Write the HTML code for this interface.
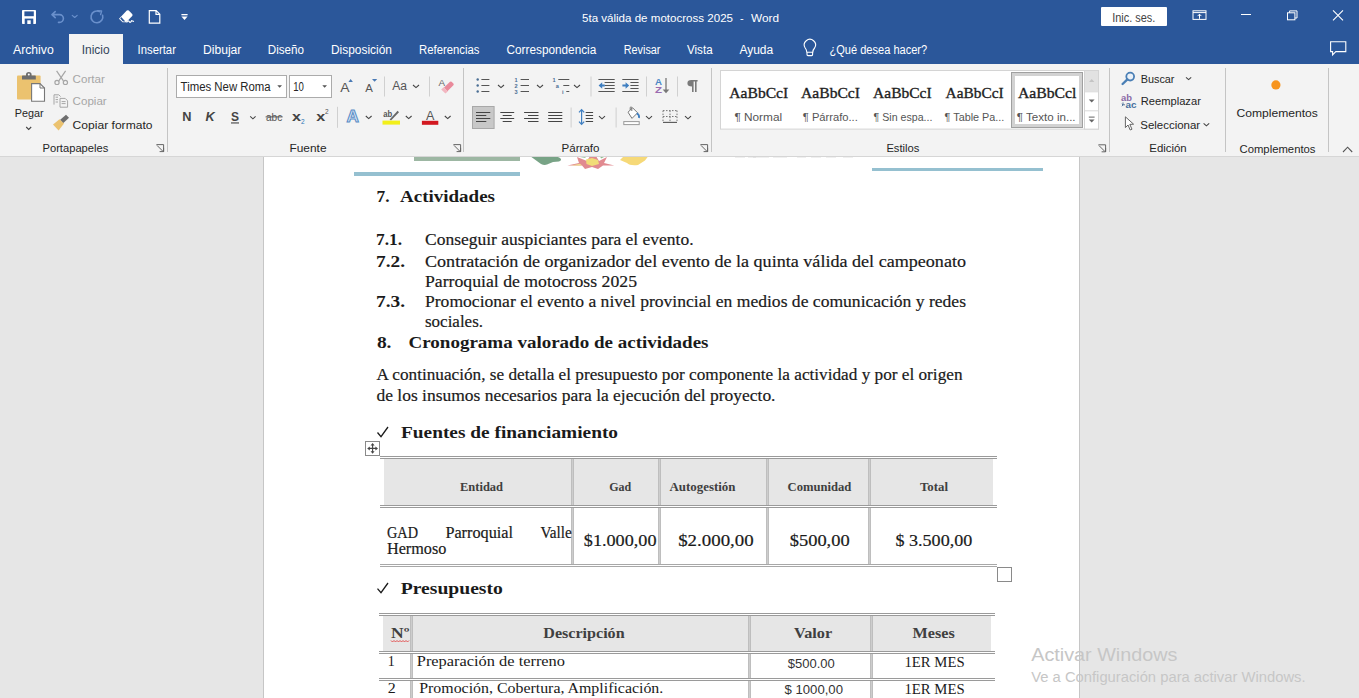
<!DOCTYPE html>
<html><head><meta charset="utf-8">
<style>
*{margin:0;padding:0;box-sizing:border-box}
html,body{width:1359px;height:698px;overflow:hidden;background:#e6e6e6;font-family:"Liberation Sans",sans-serif}
svg{position:absolute;display:block}
</style></head><body>
<svg style="position:absolute;left:0;top:156px" width="1359" height="542" viewBox="0 156 1359 542">
<rect x="264" y="156" width="815" height="542" fill="#fff"/>
<rect x="263" y="156" width="1" height="542" fill="#c6c6c6"/>
<rect x="1079" y="156" width="1" height="542" fill="#c6c6c6"/>
<g font-family="Liberation Serif" fill="#1a1a1a">
<!-- header image remnants -->
<rect x="414" y="156" width="106" height="5" fill="#9db7a3"/>
<rect x="354" y="172" width="166" height="4" fill="#95c0d0"/>
<path d="M530 156 H556 L560 158 Q562.5 160 559 161.5 L553 162 L547 164.6 Q544 165.4 541 164 Z" fill="#78a386"/>
<path d="M567.4 165.6 L579 163 L577 157 L587 161 L590 156 H596 L599 161 L607 157 L604 163 L614.3 165.4 L603 165.6 L598 169 L592 167 L585 169 L582 165.6 Z" fill="#e18a90"/>
<path d="M586 159.5 L592 158 L598 160 L599 164 L592 166 L586.5 164 Z" fill="#f1dc78"/>
<path d="M580 157 L584 156 L586 158 Z M600 156 L604 157 L601 158.4 Z" fill="#8fbf8f"/>
<path d="M571 165.4 L580 163.8 L582 165.4 Z" fill="#f0e090"/>
<path d="M620 160 L624 156 H648.4 L645 160.5 L638 165 Q630 166 627 163 Z" fill="#f6d978"/>
<rect x="650" y="156" width="80" height="1" fill="#f3ecd0"/>
<g fill="#b0b0b0"><rect x="735" y="156" width="10" height="1.2"/><rect x="748" y="156" width="8" height="1.2"/><rect x="753" y="156" width="16" height="1.2"/><rect x="773" y="156" width="14" height="1.2"/><rect x="797" y="156" width="9" height="1.2"/><rect x="811" y="156" width="10" height="1.2"/><rect x="826" y="156" width="10" height="1.2"/><rect x="843" y="156" width="10" height="1.2"/></g>
<rect x="872" y="168" width="171" height="3" fill="#95c0d0"/>

<g font-weight="bold" font-size="17.2">
<text x="376.5" y="202" textLength="13" lengthAdjust="spacingAndGlyphs">7.</text>
<text x="400" y="202" textLength="95" lengthAdjust="spacingAndGlyphs">Actividades</text>
<text x="376" y="245" textLength="26" lengthAdjust="spacingAndGlyphs">7.1.</text>
<text x="376" y="266.5" textLength="29" lengthAdjust="spacingAndGlyphs">7.2.</text>
<text x="376" y="307" textLength="29" lengthAdjust="spacingAndGlyphs">7.3.</text>
<text x="376.9" y="348" textLength="14.6" lengthAdjust="spacingAndGlyphs">8.</text>
<text x="408.5" y="348" textLength="300" lengthAdjust="spacingAndGlyphs">Cronograma valorado de actividades</text>
<text x="401" y="438" textLength="217" lengthAdjust="spacingAndGlyphs">Fuentes de financiamiento</text>
<text x="400.8" y="594" textLength="102" lengthAdjust="spacingAndGlyphs">Presupuesto</text>
</g>
<g font-size="17.2" stroke="#1a1a1a" stroke-width="0.2">
<text x="425" y="245" textLength="268.6" lengthAdjust="spacingAndGlyphs">Conseguir auspiciantes para el evento.</text>
<text x="425" y="266.5" textLength="541" lengthAdjust="spacingAndGlyphs">Contratación de organizador del evento de la quinta válida del campeonato</text>
<text x="425" y="286.6" textLength="212" lengthAdjust="spacingAndGlyphs">Parroquial de motocross 2025</text>
<text x="425" y="306.6" textLength="541" lengthAdjust="spacingAndGlyphs">Promocionar el evento a nivel provincial en medios de comunicación y redes</text>
<text x="425" y="326.8" textLength="58" lengthAdjust="spacingAndGlyphs">sociales.</text>
<text x="376.5" y="380" textLength="586" lengthAdjust="spacingAndGlyphs">A continuación, se detalla el presupuesto por componente la actividad y por el origen</text>
<text x="376.5" y="400.5" textLength="399" lengthAdjust="spacingAndGlyphs">de los insumos necesarios para la ejecución del proyecto.</text>
</g>
<path d="M377.5 432.5 L381 436.6 L388 427" fill="none" stroke="#1a1a1a" stroke-width="1.3"/>
<path d="M377.5 588.6 L381 592.6 L388 583" fill="none" stroke="#1a1a1a" stroke-width="1.3"/>
</g>
<g font-family="Liberation Serif" fill="#1a1a1a">
<rect x="384" y="459" width="187" height="46" fill="#e6e6e6"/>
<rect x="574" y="459" width="84" height="46" fill="#e6e6e6"/>
<rect x="661" y="459" width="105" height="46" fill="#e6e6e6"/>
<rect x="768" y="459" width="100" height="46" fill="#e6e6e6"/>
<rect x="871" y="459" width="122" height="46" fill="#e6e6e6"/>
<rect x="571" y="459" width="3" height="105" fill="#cdcdcd"/><rect x="571" y="459" width="1" height="105" fill="#bebebe"/><rect x="573" y="459" width="1" height="105" fill="#bebebe"/>
<rect x="658" y="459" width="3" height="105" fill="#cdcdcd"/><rect x="658" y="459" width="1" height="105" fill="#bebebe"/><rect x="660" y="459" width="1" height="105" fill="#bebebe"/>
<rect x="766" y="459" width="3" height="105" fill="#cdcdcd"/><rect x="766" y="459" width="1" height="105" fill="#bebebe"/><rect x="768" y="459" width="1" height="105" fill="#bebebe"/>
<rect x="868" y="459" width="3" height="105" fill="#cdcdcd"/><rect x="868" y="459" width="1" height="105" fill="#bebebe"/><rect x="870" y="459" width="1" height="105" fill="#bebebe"/>
<rect x="380" y="506" width="617" height="1" fill="#fff"/><rect x="380" y="565" width="617" height="1" fill="#fff"/>
<rect x="380" y="456" width="617" height="1" fill="#9a9a9a"/>
<rect x="380" y="458" width="617" height="1" fill="#9a9a9a"/>
<rect x="380" y="505" width="617" height="1" fill="#9a9a9a"/>
<rect x="380" y="507" width="617" height="1" fill="#9a9a9a"/>
<rect x="380" y="564" width="617" height="1" fill="#a8a8a8"/>
<rect x="380" y="566" width="617" height="1" fill="#a8a8a8"/>
<g font-weight="bold" font-size="12" fill="#404040">
<text x="460" y="490.6" textLength="43" lengthAdjust="spacingAndGlyphs">Entidad</text>
<text x="609.3" y="490.6" textLength="22" lengthAdjust="spacingAndGlyphs">Gad</text>
<text x="669.5" y="490.6" textLength="66" lengthAdjust="spacingAndGlyphs">Autogestión</text>
<text x="787.6" y="490.6" textLength="63.8" lengthAdjust="spacingAndGlyphs">Comunidad</text>
<text x="920" y="490.6" textLength="28" lengthAdjust="spacingAndGlyphs">Total</text>
</g><g font-size="17.2" stroke="#1a1a1a" stroke-width="0.2">
<text x="387" y="537.5" textLength="31" lengthAdjust="spacingAndGlyphs">GAD</text>
<text x="445.4" y="537.5" textLength="67.6" lengthAdjust="spacingAndGlyphs">Parroquial</text>
<text x="540.4" y="537.5" textLength="31.3" lengthAdjust="spacingAndGlyphs">Valle</text>
<text x="387" y="553.5" textLength="59.3" lengthAdjust="spacingAndGlyphs">Hermoso</text>
<text x="583.8" y="545.6" textLength="72.7" lengthAdjust="spacingAndGlyphs">$1.000,00</text>
<text x="678.2" y="545.6" textLength="75.5" lengthAdjust="spacingAndGlyphs">$2.000,00</text>
<text x="789.7" y="545.6" textLength="60" lengthAdjust="spacingAndGlyphs">$500,00</text>
<text x="895.4" y="545.6" textLength="76.9" lengthAdjust="spacingAndGlyphs">$ 3.500,00</text>
</g>
<rect x="365.5" y="441.5" width="14" height="14" fill="#fff" stroke="#8a8a8a"/>
<path d="M372.6 445 V452 M369 448.4 H376.2" stroke="#444" stroke-width="1.1" fill="none"/>
<path d="M372.6 443 L370.6 445.6 H374.6 Z M372.6 453.8 L370.6 451.2 H374.6 Z M367.2 448.4 L369.8 446.4 V450.4 Z M378 448.4 L375.4 446.4 V450.4 Z" fill="#444"/>
<rect x="997.5" y="567.5" width="14" height="14" fill="#fff" stroke="#8a8a8a"/>
<rect x="383" y="616" width="27" height="35" fill="#e6e6e6"/>
<rect x="413" y="616" width="335" height="35" fill="#e6e6e6"/>
<rect x="750" y="616" width="120" height="35" fill="#e6e6e6"/>
<rect x="872" y="616" width="119" height="35" fill="#e6e6e6"/>
<rect x="410" y="616" width="3" height="82" fill="#cdcdcd"/><rect x="410" y="616" width="1" height="82" fill="#bebebe"/><rect x="412" y="616" width="1" height="82" fill="#bebebe"/>
<rect x="748" y="616" width="3" height="82" fill="#cdcdcd"/><rect x="748" y="616" width="1" height="82" fill="#bebebe"/><rect x="750" y="616" width="1" height="82" fill="#bebebe"/>
<rect x="870" y="616" width="3" height="82" fill="#cdcdcd"/><rect x="870" y="616" width="1" height="82" fill="#bebebe"/><rect x="872" y="616" width="1" height="82" fill="#bebebe"/>
<rect x="379" y="652" width="616" height="1" fill="#fff"/><rect x="379" y="679" width="616" height="1" fill="#fff"/>
<rect x="379" y="613" width="616" height="1" fill="#9a9a9a"/>
<rect x="379" y="615" width="616" height="1" fill="#9a9a9a"/>
<rect x="379" y="651" width="616" height="1" fill="#9a9a9a"/>
<rect x="379" y="653" width="616" height="1" fill="#9a9a9a"/>
<rect x="379" y="678" width="616" height="1" fill="#9a9a9a"/>
<rect x="379" y="680" width="616" height="1" fill="#9a9a9a"/>
<g font-weight="bold" font-size="14" fill="#404040">
<text x="391" y="637.9" textLength="18.4" lengthAdjust="spacingAndGlyphs">Nº</text>
<text x="543.3" y="637.9" textLength="81.3" lengthAdjust="spacingAndGlyphs">Descripción</text>
<text x="794" y="637.9" textLength="38.2" lengthAdjust="spacingAndGlyphs">Valor</text>
<text x="912.6" y="637.9" textLength="42.1" lengthAdjust="spacingAndGlyphs">Meses</text>
</g>
<path d="M391 640.5 l1.5 1.5 1.5-1.5 1.5 1.5 1.5-1.5 1.5 1.5 1.5-1.5 1.5 1.5 1.5-1.5 1.5 1.5 1.5-1.5 1.5 1.5 1.5-1.5" stroke="#e03030" fill="none" stroke-width="0.8"/>
<g font-size="15">
<text x="387.8" y="666.3" textLength="7" lengthAdjust="spacingAndGlyphs">1</text>
<text x="416.8" y="666.3" textLength="148.2" lengthAdjust="spacingAndGlyphs">Preparación de terreno</text>
<text x="387.8" y="693.3" textLength="8" lengthAdjust="spacingAndGlyphs">2</text>
<text x="419.2" y="693.3" textLength="244.1" lengthAdjust="spacingAndGlyphs">Promoción, Cobertura, Amplificación.</text>
<text x="904.4" y="667" textLength="60.2" lengthAdjust="spacingAndGlyphs">1ER MES</text>
<text x="904.4" y="694" textLength="60.2" lengthAdjust="spacingAndGlyphs">1ER MES</text>
</g><g font-size="13" font-family="Liberation Sans" fill="#333">
<text x="787.8" y="667.9" textLength="47" lengthAdjust="spacingAndGlyphs">$500.00</text>
<text x="784.5" y="694.4" textLength="58.5" lengthAdjust="spacingAndGlyphs">$ 1000,00</text>
</g>
</g>
<g font-family="Liberation Sans" fill="#c6c6c6">
<text x="1031.2" y="661" font-size="18.2" textLength="146.3" lengthAdjust="spacingAndGlyphs">Activar Windows</text>
<text x="1031.2" y="681.8" font-size="14" textLength="274.4" lengthAdjust="spacingAndGlyphs">Ve a Configuración para activar Windows.</text>
</g>
</svg>

<svg style="left:0;top:0" width="1359" height="157" viewBox="0 0 1359 157">
<defs>
<style>
.ui{font-family:"Liberation Sans",sans-serif}
.w{fill:#fff}
</style>
</defs>
<!-- title bar + tabs -->
<rect x="0" y="0" width="1359" height="64" fill="#2b579a"/>
<!-- ribbon -->
<rect x="0" y="64" width="1359" height="92" fill="#f3f3f3"/>
<rect x="0" y="156" width="1359" height="1" fill="#d6d6d6"/>
<rect x="69" y="34" width="54" height="30" fill="#f3f3f3"/>

<g class="ui" fill="#fff">
<text x="582" y="21.7" font-size="11" textLength="151" lengthAdjust="spacingAndGlyphs">5ta válida de motocross 2025</text>
<text x="740" y="21.7" font-size="11">-</text>
<text x="751" y="21.7" font-size="11" textLength="28" lengthAdjust="spacingAndGlyphs">Word</text>
</g>
<g class="ui" fill="#fff" font-size="12">
<text x="13" y="53.7" textLength="40.7" lengthAdjust="spacingAndGlyphs">Archivo</text>
<text x="81.7" y="53.9" textLength="27.9" lengthAdjust="spacingAndGlyphs" fill="#35465c">Inicio</text>
<text x="137.6" y="53.7" textLength="38.3" lengthAdjust="spacingAndGlyphs">Insertar</text>
<text x="203" y="53.7" textLength="38.4" lengthAdjust="spacingAndGlyphs">Dibujar</text>
<text x="267.8" y="53.7" textLength="36.2" lengthAdjust="spacingAndGlyphs">Diseño</text>
<text x="331" y="53.7" textLength="61" lengthAdjust="spacingAndGlyphs">Disposición</text>
<text x="419.1" y="53.7" textLength="60.4" lengthAdjust="spacingAndGlyphs">Referencias</text>
<text x="506.5" y="53.7" textLength="89.8" lengthAdjust="spacingAndGlyphs">Correspondencia</text>
<text x="623.7" y="53.7" textLength="36.8" lengthAdjust="spacingAndGlyphs">Revisar</text>
<text x="687" y="53.7" textLength="25.6" lengthAdjust="spacingAndGlyphs">Vista</text>
<text x="739.4" y="53.7" textLength="33.8" lengthAdjust="spacingAndGlyphs">Ayuda</text>
<text x="829.5" y="53.7" textLength="97.7" lengthAdjust="spacingAndGlyphs">¿Qué desea hacer?</text>
</g>
<!-- sign in -->
<rect x="1101" y="7" width="66" height="19" rx="1" fill="#fff"/>
<text class="ui" x="1112.2" y="21.8" font-size="12" fill="#444" textLength="43.1" lengthAdjust="spacingAndGlyphs">Inic. ses.</text>

<!-- ribbon group labels -->
<g class="ui" fill="#262626" font-size="11.5">
<text x="42.5" y="152.1" textLength="65.8" lengthAdjust="spacingAndGlyphs">Portapapeles</text>
<text x="289.5" y="152.1" textLength="37" lengthAdjust="spacingAndGlyphs">Fuente</text>
<text x="561.5" y="152.1" textLength="38" lengthAdjust="spacingAndGlyphs">Párrafo</text>
<text x="886.4" y="152.1" textLength="33" lengthAdjust="spacingAndGlyphs">Estilos</text>
<text x="1149.3" y="151.8" textLength="37.4" lengthAdjust="spacingAndGlyphs">Edición</text>
<text x="1239.5" y="152.5" textLength="76" lengthAdjust="spacingAndGlyphs">Complementos</text>
</g>
<!-- group separators -->
<g fill="#c4c4c4">
<rect x="167" y="68" width="1" height="84"/>
<rect x="463" y="68" width="1" height="84"/>
<rect x="711" y="68" width="1" height="84"/>
<rect x="1109" y="68" width="1" height="84"/>
<rect x="1225" y="68" width="1" height="84"/>
<rect x="1328" y="68" width="1" height="84"/>
</g>
<!-- QAT -->
<rect x="22" y="10" width="14" height="14" rx="0.8" fill="#fff"/>
<rect x="24.4" y="11.4" width="9.4" height="4.8" fill="#2b579a"/>
<rect x="24.7" y="18.6" width="8.6" height="5.4" fill="#2b579a"/>
<rect x="27.3" y="20.3" width="3.4" height="3.7" fill="#fff"/>
<g stroke="#6a90cc" fill="none" stroke-width="1.6" stroke-linecap="round" stroke-linejoin="round">
<path d="M52 14.6 L55.2 11.6 M52 14.6 L55.2 17.6 M52 14.6 H59.5 A3.9 3.9 0 0 1 59.5 22.4 H58.5"/>
<path d="M72.2 15.3 L74.7 17.5 L77.2 15.3" stroke-width="1.1"/>
<path d="M99.6 11.6 A5.9 5.9 0 1 0 102.6 15.2"/>
<path d="M97.6 10.6 L101.6 11 L100.6 14.6" stroke-width="1.4"/>
</g>
<g fill="#fff">
<path d="M119 18.8 L126.8 10.6 Q127.8 9.8 128.8 10.6 L132.2 14 Q133 15 132.2 16 L126.2 22.2 L122.6 22.2 Z"/>
<path d="M121.2 17 L125.4 21.4 L123 21.4 L120.2 18.4 Z" fill="#2b579a"/>
<path d="M126.6 22.6 Q128 19.8 129.2 21.6 Q130.4 23.4 131.6 20.8 L134 21.6" fill="none" stroke="#fff" stroke-width="1.1"/>
</g>
<path d="M149.3 10.6 H156.2 L159.8 14.2 V23.2 H149.3 Z M156 10.6 V14.4 H159.8" fill="none" stroke="#fff" stroke-width="1.2"/>
<rect x="181.4" y="14" width="6.2" height="1.3" fill="#fff"/>
<path d="M181.4 16.6 H187.6 L184.5 19.9 Z" fill="#fff"/>
<!-- window controls -->
<g stroke="#fff" fill="none" stroke-width="1">
<rect x="1193" y="10.8" width="13" height="8.6"/>
<path d="M1193 12.6 H1206 M1199.5 18.8 V14.2 M1197.6 16.1 L1199.5 14.2 L1201.4 16.1"/>
<path d="M1241 14.5 H1251"/>
<rect x="1287.5" y="12.8" width="7.4" height="7"/>
<path d="M1289.6 12.8 V10.9 H1297 V18 H1294.9"/>
<path d="M1333 10.3 L1343 20.3 M1343 10.3 L1333 20.3" stroke-width="1.1"/>
<path d="M1330.6 41.8 H1345.8 V51.6 H1335.8 L1332.6 54.8 V51.6 H1330.6 Z" stroke-width="1.1"/>
<path d="M807 52.6 V54.6 Q807 55.6 808 55.6 H811.6 Q812.6 55.6 812.6 54.6 V52.6 M806.8 52.2 Q806.6 49.6 805.2 48 A5.6 5.6 0 1 1 814.6 48 Q813 49.6 812.8 52.2 Z" stroke-width="1.1"/>
</g>

<!-- Portapapeles -->
<rect x="17" y="75.5" width="23.6" height="24" rx="1" fill="#ebc26f"/>
<path d="M22 79.4 V76.2 Q22 75.6 22.6 75.6 H26 V74.6 Q26 72 28.8 72 Q31.6 72 31.6 74.6 V75.6 H35.2 Q35.8 75.6 35.8 76.2 V79.4 Z" fill="#6e6e6e"/>
<circle cx="28.8" cy="74.6" r="1" fill="#fff"/>
<path d="M31.6 83.6 H40 L44.5 88 V101.2 H31.6 Z" fill="#fff" stroke="#777" stroke-width="1.1"/>
<path d="M40 83.6 V88 H44.5" fill="none" stroke="#777" stroke-width="1"/>
<g class="ui" fill="#262626" font-size="11.5">
<text x="14.8" y="116.6" textLength="28.8" lengthAdjust="spacingAndGlyphs">Pegar</text>
<text x="72.6" y="128.5" textLength="79.9" lengthAdjust="spacingAndGlyphs">Copiar formato</text>
</g>
<path d="M26.2 127 L28.7 129.4 L31.2 127" fill="none" stroke="#444" stroke-width="1.1"/>
<g class="ui" fill="#a6a6a6" font-size="11.5">
<text x="72.6" y="82.8" textLength="32.2" lengthAdjust="spacingAndGlyphs">Cortar</text>
<text x="72.6" y="105.3" textLength="34.1" lengthAdjust="spacingAndGlyphs">Copiar</text>
</g>
<g fill="none" stroke="#a6a6a6" stroke-width="1.2">
<path d="M56.6 70.8 L63.4 80.8 M65.6 70.8 L58.8 80.8"/>
<circle cx="57" cy="82.4" r="2.1"/>
<circle cx="65.4" cy="82.4" r="2.1"/>
<path d="M54 104.6 V94.8 H58.8 L60.6 96.6 M60 98.4 H65.2 L67.6 100.8 V107.2 H60 Z M55.6 97.2 H58 M55.6 99.6 H58 M55.6 102 H58 M61.6 101.6 H65.6 M61.6 103.6 H65.6" stroke-width="1"/>
</g>
<path d="M53 124.5 L59.5 119.2 L64 123.6 L58.6 130.6 Z" fill="#ebc26f"/>
<path d="M60.2 119.8 L66 114.8 L69 117.8 L63.4 123 Z" fill="#6e6e6e"/>
<path d="M156.4 144.6 H163.6 V151.8 M157 145.4 L163 151.4 M159.6 151.6 H163.6 V147.8" fill="none" stroke="#666" stroke-width="1"/>
<!-- Fuente -->
<rect x="176.5" y="75.5" width="110" height="22" fill="#fff" stroke="#ababab"/>
<rect x="289.5" y="75.5" width="42" height="22" fill="#fff" stroke="#ababab"/>
<g class="ui" fill="#262626" font-size="12">
<text x="180.6" y="90.6" textLength="90.1" lengthAdjust="spacingAndGlyphs">Times New Roma</text>
<text x="293.2" y="90.6" textLength="10.7" lengthAdjust="spacingAndGlyphs">10</text>
</g>
<path d="M277.3 85.2 H282 L279.65 87.8 Z M322.3 85.2 H327 L324.65 87.8 Z" fill="#555"/>
<g class="ui" fill="#444" font-weight="bold">
<text x="182.2" y="121.2" font-size="12.5" textLength="9.2" lengthAdjust="spacingAndGlyphs">N</text>
<text x="205.6" y="121.2" font-size="12.5" font-style="italic" textLength="9.2" lengthAdjust="spacingAndGlyphs">K</text>
<text x="231" y="121.2" font-size="12.5" textLength="8" lengthAdjust="spacingAndGlyphs">S</text>
<text x="292" y="121.2" font-size="12" textLength="9" lengthAdjust="spacingAndGlyphs">x</text>
<text x="316.3" y="121.2" font-size="12" textLength="9" lengthAdjust="spacingAndGlyphs">x</text>
</g>
<rect x="231" y="122.4" width="8" height="1.1" fill="#444"/>
<text class="ui" x="266" y="120.8" font-size="11" fill="#555" textLength="16.3" lengthAdjust="spacingAndGlyphs">abc</text>
<rect x="265.6" y="116.4" width="17" height="1" fill="#555"/>
<text class="ui" x="301" y="123.6" font-size="6.5" fill="#2e75b6">2</text>
<text class="ui" x="325" y="113.6" font-size="6.5" fill="#555">2</text>
<g fill="none" stroke="#444" stroke-width="1.1">
<path d="M250.2 116.4 L252.9 118.8 L255.6 116.4"/>
<path d="M365.8 116 L368.7 118.6 L371.6 116"/>
<path d="M405.8 116 L408.7 118.6 L411.6 116"/>
<path d="M444.8 116 L447.7 118.6 L450.6 116"/>
<path d="M413 85 L416 87.6 L419 85"/>
</g>
<g class="ui" fill="#555">
<text x="340.2" y="91.6" font-size="13.5" textLength="9.3" lengthAdjust="spacingAndGlyphs">A</text>
<text x="365.2" y="91.6" font-size="10.8" textLength="7.6" lengthAdjust="spacingAndGlyphs">A</text>
<text x="392.2" y="89.8" font-size="12" textLength="14.8" lengthAdjust="spacingAndGlyphs">Aa</text>
<text x="438.6" y="86.4" font-size="9.5" fill="#666" textLength="6.6" lengthAdjust="spacingAndGlyphs">A</text>
</g>
<path d="M348.4 81.9 L350.65 79.1 L352.9 81.9 Z M372 79 H377.2 L374.6 81.8 Z" fill="#4a7ab5"/>
<rect x="384" y="76.5" width="1" height="20" fill="#d0d0d0"/>
<rect x="429" y="76.5" width="1" height="20" fill="#d0d0d0"/>
<rect x="337" y="106.8" width="1" height="21" fill="#d0d0d0"/>
<path d="M444 87.6 L450 81.8 Q450.8 81 451.6 81.8 L453.4 83.6 Q454.2 84.4 453.4 85.2 L447.4 91.2 Z" fill="#e98a9b"/>
<path d="M441.2 89.6 L443.6 87.2 L447.8 91.4 L445.4 93.4 Z" fill="#f2b6c0"/>
<text class="ui" x="346.6" y="122.4" font-size="16" font-weight="bold" fill="#dbe8f6" stroke="#5b8fc7" stroke-width="1" textLength="12.4" lengthAdjust="spacingAndGlyphs">A</text>
<text class="ui" x="383.2" y="117.2" font-size="9" fill="#555" font-weight="bold" textLength="9" lengthAdjust="spacingAndGlyphs">ab</text>
<path d="M389.6 119.4 L397.6 110.8 L399 112.2 L391 120.6 Z" fill="#666"/>
<rect x="382.5" y="120.6" width="17.5" height="4" fill="#f2ef1a"/>
<text class="ui" x="426" y="120.1" font-size="12.5" fill="#555" textLength="8.4" lengthAdjust="spacingAndGlyphs">A</text>
<rect x="421.9" y="120.8" width="16.4" height="4" fill="#d21820"/>
<path d="M453.4 144.6 H460.6 V151.8 M454 145.4 L460 151.4 M456.6 151.6 H460.6 V147.8" fill="none" stroke="#666" stroke-width="1"/>

<!-- Parrafo -->
<g fill="#4a6e94">
<circle cx="477.7" cy="79.5" r="1.2"/><circle cx="477.7" cy="85.5" r="1.2"/><circle cx="477.7" cy="91.5" r="1.2"/>
</g>
<g stroke="#555" stroke-width="1" fill="none">
<path d="M481.4 79.5 H489.4 M481.4 85.5 H489.4 M481.4 91.5 H489.4"/>
<path d="M520.6 79.5 H529 M520.6 85.5 H529 M520.6 91.5 H529"/>
<path d="M558.3 79.5 H569.3 M563.3 85.5 H569.3 M566.3 91.5 H569.3"/>
</g>
<g class="ui" fill="#4a6e94" font-size="5.6" font-weight="bold">
<text x="514.4" y="81.6">1</text><text x="514.4" y="87.6">2</text><text x="514.4" y="93.6">3</text>
<text x="552.4" y="81.6">1</text><text x="555.8" y="87.6">a</text><text x="562" y="93.6">i</text>
</g>
<g fill="none" stroke="#444" stroke-width="1.1">
<path d="M498 85 L501 87.6 L504 85"/>
<path d="M537 85 L540 87.6 L543 85"/>
<path d="M574 85 L577 87.6 L580 85"/>
<path d="M599 116.2 L602 118.8 L605 116.2"/>
<path d="M646 116.2 L649 118.8 L652 116.2"/>
<path d="M685 116.2 L688 118.8 L691 116.2"/>
</g>
<rect x="590.5" y="76.5" width="1" height="20" fill="#d0d0d0"/>
<rect x="646" y="76.5" width="1" height="20" fill="#d0d0d0"/>
<rect x="677" y="76.5" width="1" height="20" fill="#d0d0d0"/>
<rect x="570.6" y="107.5" width="1" height="20" fill="#d0d0d0"/>
<rect x="615.6" y="107.5" width="1" height="20" fill="#d0d0d0"/>
<!-- indent -->
<g stroke="#555" stroke-width="1" fill="none">
<path d="M598.4 79.5 H614.7 M604.6 82.5 H614.7 M604.6 85.5 H614.7 M604.6 88.5 H614.7 M598.4 91.5 H614.7"/>
<path d="M622.3 79.5 H638.6 M630.4 82.5 H638.6 M630.4 85.5 H638.6 M630.4 88.5 H638.6 M622.3 91.5 H638.6"/>
</g>
<path d="M598.6 85.5 L602.2 82.2 V84.4 H604.8 V86.6 H602.2 V88.8 Z" fill="#3f7fc1"/>
<path d="M629.2 85.5 L625.6 82.2 V84.4 H622.4 V86.6 H625.6 V88.8 Z" fill="#3f7fc1"/>
<!-- sort -->
<text class="ui" x="655" y="84.5" font-size="8.6" font-weight="bold" fill="#4a86c5" textLength="7" lengthAdjust="spacingAndGlyphs">A</text>
<text class="ui" x="655" y="93" font-size="8.6" font-weight="bold" fill="#9b6bb0" textLength="7" lengthAdjust="spacingAndGlyphs">Z</text>
<path d="M666 78 V91" stroke="#777" stroke-width="1.3"/>
<path d="M662.7 89.4 H669.3 L666 93.2 Z" fill="#777"/>
<!-- pilcrow -->
<path d="M691.4 80 H697.6 V81.4 H696.6 V92 H695 V81.4 H693.6 V92 H692 V86.6 Q687.4 86.6 687.4 83.3 Q687.4 80 691.4 80 Z" fill="#7a7a7a"/>
<!-- align -->
<rect x="472.5" y="106.5" width="21.6" height="22" fill="#c8c8c8" stroke="#a8a8a8"/>
<g stroke="#444" stroke-width="1" fill="none">
<path d="M476 112.5 H490.3 M476 115.5 H486.3 M476 118.5 H490.3 M476 121.5 H486.3"/>
<path d="M500.3 112.5 H514.2 M502.7 115.5 H511.7 M500.3 118.5 H514.2 M502.7 121.5 H511.7"/>
<path d="M524.1 112.5 H538.5 M528 115.5 H538.5 M524.1 118.5 H538.5 M528 121.5 H538.5"/>
<path d="M548.2 112.5 H562.3 M548.2 115.5 H562.3 M548.2 118.5 H562.3 M548.2 121.5 H562.3"/>
<path d="M585.7 112.5 H593.1 M585.7 115.5 H593.1 M585.7 118.5 H593.1 M585.7 121.5 H593.1"/>
</g>
<g stroke="#3f7fc1" stroke-width="1.2" fill="none">
<path d="M581.6 110 V124 M579 112.4 L581.6 109.6 L584.2 112.4 M579 121.6 L581.6 124.4 L584.2 121.6"/>
</g>
<!-- shading -->
<path d="M628 112.2 L632.6 107.8 L637.6 112.8 L632 118.4 Z" fill="#fff" stroke="#777" stroke-width="1"/>
<path d="M630.2 110 V107.4 Q631 106.2 631.8 107.4 V111" fill="none" stroke="#777" stroke-width="1"/>
<path d="M636.8 113.4 Q639.6 114.6 639 118" fill="none" stroke="#3f7fc1" stroke-width="1.8"/>
<rect x="623.8" y="121.6" width="15.4" height="3" fill="#fff" stroke="#999" stroke-width="1"/>
<!-- borders -->
<g stroke="#777" stroke-width="1" fill="none" stroke-dasharray="1.5 1.5">
<path d="M663 110.6 H677 M663 116.5 H677 M663 110.6 V122 M670 110.6 V122 M677 110.6 V122"/>
</g>
<path d="M663 122.4 H677" stroke="#555" stroke-width="1.1"/>
<path d="M700.4 144.6 H707.6 V151.8 M701 145.4 L707 151.4 M703.6 151.6 H707.6 V147.8" fill="none" stroke="#666" stroke-width="1"/>
<!-- Estilos gallery -->
<rect x="720.5" y="70.5" width="378" height="58.6" fill="#fff" stroke="#d4d4d4"/>
<rect x="1011.5" y="72.5" width="71" height="55" fill="#fff" stroke="#a0a0a0"/>
<rect x="1013.5" y="74.5" width="67" height="51" fill="none" stroke="#d2d2d2" stroke-width="3"/>
<g font-family="Liberation Serif" fill="#1e1e1e" stroke="#1e1e1e" stroke-width="0.35" font-size="15.6">
<text x="729.3" y="97.6" textLength="58.9" lengthAdjust="spacingAndGlyphs">AaBbCcI</text>
<text x="801.1" y="97.6" textLength="58.9" lengthAdjust="spacingAndGlyphs">AaBbCcI</text>
<text x="873.1" y="97.6" textLength="58.5" lengthAdjust="spacingAndGlyphs">AaBbCcI</text>
<text x="945.6" y="97.6" textLength="58" lengthAdjust="spacingAndGlyphs">AaBbCcI</text>
<text x="1017.9" y="97.6" textLength="58.5" lengthAdjust="spacingAndGlyphs">AaBbCcl</text>
</g>
<g class="ui" fill="#555" font-size="11.5">
<text x="734.4" y="120.8" textLength="47.7" lengthAdjust="spacingAndGlyphs">¶ Normal</text>
<text x="802.8" y="120.8" textLength="55" lengthAdjust="spacingAndGlyphs">¶ Párrafo...</text>
<text x="873.6" y="120.8" textLength="58.8" lengthAdjust="spacingAndGlyphs">¶ Sin espa...</text>
<text x="944.6" y="120.8" textLength="59.8" lengthAdjust="spacingAndGlyphs">¶ Table Pa...</text>
<text x="1016.8" y="120.8" textLength="58.8" lengthAdjust="spacingAndGlyphs">¶ Texto in...</text>
</g>
<rect x="1084.5" y="70.5" width="14" height="58.6" fill="#fff" stroke="#d4d4d4"/>
<rect x="1085" y="71" width="13" height="20.3" fill="#e2e2e2"/>
<rect x="1084.5" y="91.3" width="14" height="1" fill="#d8d8d8"/>
<rect x="1084.5" y="110.3" width="14" height="1" fill="#d8d8d8"/>
<path d="M1089 82 H1094.4 L1091.7 79 Z" fill="#c4c4c4"/>
<path d="M1088.8 99.4 H1094.6 L1091.7 102.4 Z" fill="#666"/>
<rect x="1088.8" y="116.6" width="5.8" height="1" fill="#666"/>
<path d="M1088.8 119.4 H1094.6 L1091.7 122.4 Z" fill="#666"/>
<path d="M1098.4 144.8 H1105.6 V152 M1099 145.6 L1105 151.6 M1101.6 151.8 H1105.6 V148" fill="none" stroke="#666" stroke-width="1"/>
<!-- Edicion -->
<circle cx="1130.2" cy="76.6" r="3.9" fill="#eaf1f8" stroke="#4a7fb5" stroke-width="1.8"/>
<path d="M1127.4 79.4 L1122.6 84" stroke="#4a7fb5" stroke-width="2.4" stroke-linecap="round"/>
<g class="ui" fill="#262626" font-size="11.5">
<text x="1140.7" y="82.8" textLength="33.8" lengthAdjust="spacingAndGlyphs">Buscar</text>
<text x="1140.7" y="105.3" textLength="60.2" lengthAdjust="spacingAndGlyphs">Reemplazar</text>
<text x="1140.3" y="128.5" textLength="59.9" lengthAdjust="spacingAndGlyphs">Seleccionar</text>
</g>
<text class="ui" x="1121" y="101" font-size="9" font-weight="bold" fill="#8a6aa6" textLength="11" lengthAdjust="spacingAndGlyphs">ab</text>
<text class="ui" x="1125.4" y="108" font-size="9.5" font-weight="bold" fill="#46709e" textLength="11" lengthAdjust="spacingAndGlyphs">ac</text>
<path d="M1123 102.4 V104.8 H1125 M1121.8 103.8 L1123 105 L1121.8 106.2" fill="none" stroke="#4b6d96" stroke-width="0.9"/>
<path d="M1125.4 116.8 V127.6 L1128 125 L1130.2 130 L1132 129.2 L1129.8 124.4 L1133.6 124.2 Z" fill="#fff" stroke="#666" stroke-width="1"/>
<g fill="none" stroke="#444" stroke-width="1.1">
<path d="M1186 77.4 L1188.6 79.6 L1191.2 77.4"/>
<path d="M1203.6 123.4 L1206.4 125.8 L1209.2 123.4"/>
</g>
<!-- Complementos -->
<circle cx="1275.9" cy="84.9" r="4.6" fill="#f7941d"/>
<text class="ui" x="1236.4" y="116.9" font-size="11.8" fill="#262626" textLength="81.5" lengthAdjust="spacingAndGlyphs">Complementos</text>
<path d="M1343 152 L1347.6 147.2 L1352.2 152" fill="none" stroke="#555" stroke-width="1.1"/>

<!--ICONS-->
</svg>

</body></html>
